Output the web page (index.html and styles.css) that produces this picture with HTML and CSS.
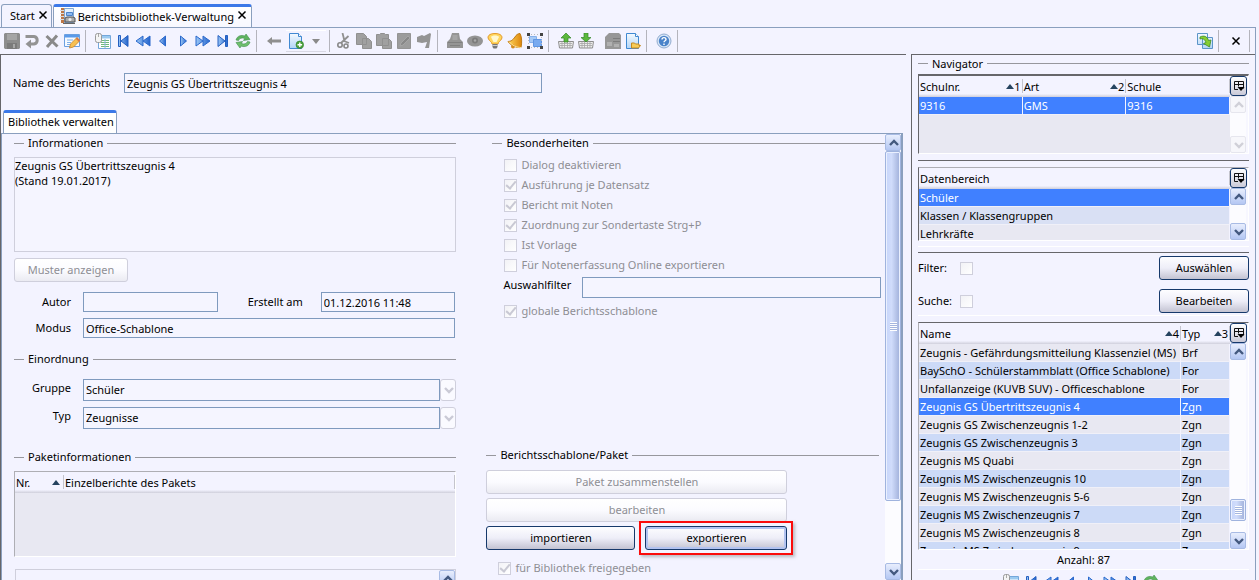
FILE: index.html
```html
<!DOCTYPE html>
<html lang="de">
<head>
<meta charset="utf-8">
<title>Berichtsbibliothek-Verwaltung</title>
<link rel="stylesheet" href="styles.css">
</head>
<body>
<svg class="defs" aria-hidden="true">
  <defs>
    <linearGradient id="g-blue" x1="0" y1="0" x2="1" y2="0"><stop offset="0" stop-color="#9cc8f6"/><stop offset="1" stop-color="#2363cc"/></linearGradient>
    <linearGradient id="g-doc" x1="0" y1="0" x2="0" y2="1"><stop offset="0" stop-color="#f4faff"/><stop offset="1" stop-color="#b2d4f6"/></linearGradient>
    <linearGradient id="g-gold" x1="0" y1="0" x2="1" y2="0"><stop offset="0" stop-color="#ffd65a"/><stop offset="1" stop-color="#dd860c"/></linearGradient>
    <symbol id="i-save" viewBox="0 0 16 16"><path d="M1 0h14l1 1v14l-1 1H1l-1-1V1z" fill="#8d8d8d"/><path d="M3 1h10v6H3z" fill="#a5a5a5"/><path d="M3 10h10v6H3z" fill="#7b7b7b"/><path d="M9 11h2v4H9z" fill="#a8a8a8"/></symbol>
    <symbol id="i-undo" viewBox="0 0 16 16"><path d="M1.500 3.500h8.500a3.800 3.800 0 0 1 0 7.500H5" fill="none" stroke="#939393" stroke-width="3"/><path d="M7 6.500v9L1.500 11z" fill="#939393"/></symbol>
    <symbol id="i-del" viewBox="0 0 16 16"><path d="M2.500 3l11 10.500M13 2.500L3 14" stroke="#8a8a8a" stroke-width="3" fill="none"/></symbol>
    <symbol id="i-edit" viewBox="0 0 16 16"><path d="M.5 1.500h15v12H.5z" fill="#f6faff" stroke="#6b9fe0"/><path d="M1 2h14v2.500H1z" fill="#5a9aea"/><path d="M3 7h6M3 9.500h4M3 11.500h3" stroke="#7fb0ea"/><path d="M5.500 15l1-4L13 4.500l3 3L9.500 14z" fill="#f7c052" stroke="#c4812a" stroke-width=".8"/><path d="M13 4.500l3 3-1.200 1.200-3-3z" fill="#d7744b"/></symbol>
    <symbol id="i-list" viewBox="0 0 16 16"><path d="M3.500 2.500h12v13h-12z" fill="#fff" stroke="#74a7db"/><path d="M4 3h11v2.500H4z" fill="#9bcaf0"/><path d="M6 7.500h8M6 9.500h8M6 11.500h8M6 13.500h8" stroke="#6fb87b"/><path d="M10 6v9" stroke="#8bb8e0"/><rect x=".5" y=".5" width="6" height="9" rx="2" fill="#f4f4f4" stroke="#999"/><path d="M3.500 1v3" stroke="#aaa"/></symbol>
    <symbol id="i-first" viewBox="0 0 16 16"><path d="M3.500 2.500h2v11h-2zM13 2.500v11L6 8z" fill="url(#g-blue)" stroke="#245fc0"/></symbol>
    <symbol id="i-rew" viewBox="0 0 16 16"><path d="M8 3v10L1 8zM15 3v10L8 8z" fill="url(#g-blue)" stroke="#2b69cc"/></symbol>
    <symbol id="i-prev" viewBox="0 0 16 16"><path d="M10.500 3v10l-6-5z" fill="url(#g-blue)" stroke="#2b69cc"/></symbol>
    <symbol id="i-next" viewBox="0 0 16 16"><path d="M5.500 3v10l6-5z" fill="url(#g-blue)" stroke="#2b69cc"/></symbol>
    <symbol id="i-ff" viewBox="0 0 16 16"><path d="M1 3v10l7-5zM8 3v10l7-5z" fill="url(#g-blue)" stroke="#2b69cc"/></symbol>
    <symbol id="i-last" viewBox="0 0 16 16"><path d="M3 2.500v11L10 8zM10.500 2.500h2v11h-2z" fill="url(#g-blue)" stroke="#245fc0"/></symbol>
    <symbol id="i-refresh" viewBox="0 0 16 16"><path d="M1 7c1-4 5-5.500 9-4l1-2 4 5.500-6.500 1 1.200-2C7 4.500 4.500 5 3.500 7.500z" fill="#5fb35f" stroke="#3e8e4a" stroke-width=".6"/><path d="M15 9c-1 4-5 5.500-9 4l-1 2-4-5.500 6.500-1-1.200 2c2.700 1 5.200.5 6.200-2z" fill="#6fbf6d" stroke="#3e8e4a" stroke-width=".6"/></symbol>
    <symbol id="i-back" viewBox="0 0 16 16"><path d="M1 8l5-4v2.500h9v3H6V12z" fill="#8f8f8f"/></symbol>
    <symbol id="i-new" viewBox="0 0 16 16"><path d="M1.500.5h9l3 3v12h-12z" fill="url(#g-doc)" stroke="#4089d2"/><path d="M10.500.5v3h3" fill="#fff" stroke="#4089d2"/><circle cx="11.800" cy="11.800" r="3.800" fill="#4ba13b" stroke="#2d7f2a" stroke-width=".6"/><path d="M11.800 9.500v4.600M9.500 11.800h4.600" stroke="#fff" stroke-width="1.400"/></symbol>
    <symbol id="i-drop" viewBox="0 0 16 16"><path d="M4 6h8l-4 5z" fill="#8a8a8a"/></symbol>
    <symbol id="i-cut" viewBox="0 0 16 16"><path d="M6.500 0l2 8M12.500 3L5 10M8 8l5 2" stroke="#909090" stroke-width="1.800" fill="none"/><circle cx="4" cy="12" r="2.200" fill="none" stroke="#888" stroke-width="1.600"/><circle cx="10" cy="13" r="2" fill="none" stroke="#888" stroke-width="1.600"/></symbol>
    <symbol id="i-copy" viewBox="0 0 16 16"><path d="M.5.5h7l3 3v8H.5zM6.500 5.500h6l3 3v7h-9z" fill="#a0a0a0" stroke="#909090"/></symbol>
    <symbol id="i-paste" viewBox="0 0 16 16"><path d="M.5 1.500h3l1-1h4l1 1h3v11H.5zM6.500 5.500h6l3 3v7h-9z" fill="#a0a0a0" stroke="#909090"/></symbol>
    <symbol id="i-note" viewBox="0 0 16 16"><path d="M1.500.5h13v15h-13z" fill="#9c9c9c" stroke="#949494"/><path d="M4 13l1-3 7-7 2 2-7 7z" fill="#888" stroke="#adadad" stroke-width=".7"/></symbol>
    <symbol id="i-flag" viewBox="0 0 16 16"><path d="M1 4l5-2 2 1 6-3 1 1-2 14h-4l2-6-5 1-5-1z" fill="#949494"/></symbol>
    <symbol id="i-print" viewBox="0 0 16 16"><path d="M5 0h7l1 6 3 3v6H0V9l3-3z" fill="#959595"/><path d="M5.500 2v5h5V2z" fill="#a5a5a5"/><path d="M1 9.500h14M3 12.500h10" stroke="#808080"/></symbol>
    <symbol id="i-eye" viewBox="0 0 16 16"><ellipse cx="8" cy="8" rx="8" ry="5.500" fill="#959595"/><circle cx="8" cy="7.500" r="3" fill="#7c7c7c"/><circle cx="8" cy="7.500" r="1.200" fill="#a9a9a9"/></symbol>
    <symbol id="i-bulb" viewBox="0 0 16 16"><path d="M8 .5c6 0 8 3 6.500 5.500-.8 2-3.500 3-3.500 5H5c0-2-2.700-3-3.500-5C0 3.500 2 .5 8 .5z" fill="#ffd65e" stroke="#e39a2c"/><path d="M4 4c1-2 7-2 8 0L9.500 9h-3z" fill="#fff7cf"/><path d="M5.500 11h5v3l-1 1.500h-3l-1-1.500z" fill="#777"/><path d="M5.500 12.500h5" stroke="#ccc"/></symbol>
    <symbol id="i-bell" viewBox="0 0 16 16"><path d="M13 .5c2 3.500 2 9.500 1 14-4 .5-10-1.500-13-6 3 0 5-1.500 7-4.500 1-2 3-3.500 5-3.500z" fill="url(#g-gold)" stroke="#bf7a12"/><circle cx="6" cy="13.500" r="2" fill="#d58b1b"/><path d="M2 8.500c3 4 8 6 12 6" stroke="#ffe59a" fill="none"/></symbol>
    <symbol id="i-trans" viewBox="0 0 16 16"><path d="M2.500 3.500h7v6h-7z" fill="#a6c9f6" stroke="#86b0ea"/><path d="M6.500 6.500h8v7h-8z" fill="#79aaf0" stroke="#5f95e4"/><path d="M0 0h3v3H0zM13 0h3v3h-3zM0 13h3v3H0zM13 13h3v3h-3z" fill="#444"/><path d="M4 1.500h8M4 14.500h8M1.500 4v8M14.500 4v8" stroke="#bbb" stroke-dasharray="1 2"/></symbol>
    <symbol id="i-up" viewBox="0 0 16 16"><path d="M.5 8.500h15l-1 6.500h-13z" fill="#eee" stroke="#8d8d8d"/><path d="M2 10.500h12M2 12.500h12M4 9v6M6.500 9v6M9.500 9v6M12 9v6" stroke="#a5a5a5" stroke-width=".8"/><path d="M8 0l5 5h-3v4H6V5H3z" fill="#5bb83c" stroke="#34862a" stroke-width=".7"/></symbol>
    <symbol id="i-down" viewBox="0 0 16 16"><path d="M.5 8.500h15l-1 6.500h-13z" fill="#eee" stroke="#8d8d8d"/><path d="M2 10.500h12M2 12.500h12M4 9v6M6.500 9v6M9.500 9v6M12 9v6" stroke="#a5a5a5" stroke-width=".8"/><path d="M8 9L3 4.500h3V0h4v4.500h3z" fill="#5bb83c" stroke="#34862a" stroke-width=".7"/></symbol>
    <symbol id="i-server" viewBox="0 0 16 16"><path d="M4 0h10l2 2v14H0V4z" fill="#979797"/><path d="M8 5.500h7M8 8.500h7" stroke="#7c7c7c"/><path d="M2 9h5v4H2zM9 11h5v3H9z" fill="#b0b0b0"/></symbol>
    <symbol id="i-open" viewBox="0 0 16 16"><path d="M1.500.5h9l3 3v12h-12z" fill="url(#g-doc)" stroke="#4089d2"/><path d="M10.500.5v3h3" fill="#fff" stroke="#4089d2"/><path d="M6.500 15v-5h3l1 1h3.500v1.500h1.500L13.500 15z" fill="#f7cc58" stroke="#c58a22"/></symbol>
    <symbol id="i-help" viewBox="0 0 16 16"><circle cx="8" cy="8" r="7" fill="#d8e6f7" stroke="#93add0"/><circle cx="8" cy="8" r="5.200" fill="#4a83ca"/><path d="M6 6.500c0-2.500 4-2.500 4 0C10 8 8 7.500 8 9.300M8 10.500v1.500" fill="none" stroke="#fff" stroke-width="1.400"/></symbol>
    <symbol id="i-export" viewBox="0 0 16 16"><path d="M.5.500h10v11H.5zM5.500 4.500h10v11h-10z" fill="url(#g-doc)" stroke="#5b94c8"/><path d="M3 4c4-2 7.500-.5 8.500 3.500l2.500-.5-1.500 7L6.500 10.500l2.500-1C8 6.500 6 5 3 6z" fill="#86ce32" stroke="#3f8b24" stroke-width=".8"/></symbol>
    <symbol id="i-book" viewBox="0 0 16 16"><path d="M1 0h4v15H1z" fill="#bd7746"/><path d="M4.500.5h9v14h-9z" fill="#e5f0fc" stroke="#83a9d2"/><path d="M6.500 4.500h6v3h-6z" fill="#8dbaf1" stroke="#4d83ca"/><path d="M0 2.500h4M0 5.500h4M0 8.500h4M0 11.500h4" stroke="#ddd"/><path d="M5 10l2-1h6l2 1v4H5z" fill="#aaa" stroke="#555"/><path d="M3 15.500h12" stroke="#666"/><circle cx="10" cy="11.500" r="1.500" fill="#eee"/></symbol>
    <symbol id="i-close" viewBox="0 0 16 16"><path d="M4.500 4.500l7 7M11.500 4.500l-7 7" stroke="#000" stroke-width="1.500"/></symbol>
    <symbol id="i-cols" viewBox="0 0 16 16"><path d="M3.500 3.500h9v7M3.500 3.500v8H7M3.500 6.500h9M7.500 3.500v5" fill="none" stroke="#111"/><path d="M6.500 9h7L10 13z" fill="#000"/></symbol>
    <symbol id="i-cu" viewBox="0 0 16 16"><path d="M4 10l4-4 4 4" fill="none" stroke="currentColor" stroke-width="2.400"/></symbol>
    <symbol id="i-cd" viewBox="0 0 16 16"><path d="M4 6l4 4 4-4" fill="none" stroke="currentColor" stroke-width="2.400"/></symbol>
  </defs>
</svg>

<nav class="tabs">
  <div class="tab"><a href="#start">Start</a><button class="tab-close" aria-label="Start schließen"><svg><use href="#i-close"/></svg></button></div>
  <div class="tab active"><svg class="tab-icon"><use href="#i-book"/></svg><a href="#bericht">Berichtsbibliothek-Verwaltung</a><button class="tab-close" aria-label="Verwaltung schließen"><svg><use href="#i-close"/></svg></button></div>
</nav>

<div class="window">
  <div class="toolbar" role="toolbar" aria-label="Werkzeuge">
    <button aria-label="Speichern"><svg><use href="#i-save"/></svg></button>
    <button aria-label="Rückgängig"><svg><use href="#i-undo"/></svg></button>
    <button aria-label="Löschen"><svg><use href="#i-del"/></svg></button>
    <button aria-label="Bearbeiten"><svg><use href="#i-edit"/></svg></button>
    <i class="sep"></i>
    <button aria-label="Liste"><svg><use href="#i-list"/></svg></button>
    <button aria-label="Erster"><svg><use href="#i-first"/></svg></button>
    <button aria-label="Seite zurück"><svg><use href="#i-rew"/></svg></button>
    <button aria-label="Zurück"><svg><use href="#i-prev"/></svg></button>
    <button aria-label="Weiter"><svg><use href="#i-next"/></svg></button>
    <button aria-label="Seite weiter"><svg><use href="#i-ff"/></svg></button>
    <button aria-label="Letzter"><svg><use href="#i-last"/></svg></button>
    <button aria-label="Aktualisieren"><svg><use href="#i-refresh"/></svg></button>
    <i class="sep"></i>
    <button aria-label="Vorheriges"><svg><use href="#i-back"/></svg></button>
    <span class="split">
      <button aria-label="Neu"><svg><use href="#i-new"/></svg></button>
      <button aria-label="Neu Auswahl"><svg><use href="#i-drop"/></svg></button>
    </span>
    <i class="sep tight"></i>
    <button aria-label="Ausschneiden"><svg><use href="#i-cut"/></svg></button>
    <button aria-label="Kopieren"><svg><use href="#i-copy"/></svg></button>
    <button aria-label="Einfügen"><svg><use href="#i-paste"/></svg></button>
    <button aria-label="Notiz"><svg><use href="#i-note"/></svg></button>
    <button aria-label="Markieren"><svg><use href="#i-flag"/></svg></button>
    <i class="sep"></i>
    <button aria-label="Drucken"><svg><use href="#i-print"/></svg></button>
    <button aria-label="Vorschau"><svg><use href="#i-eye"/></svg></button>
    <button aria-label="Hinweis"><svg><use href="#i-bulb"/></svg></button>
    <button aria-label="Erinnerung"><svg><use href="#i-bell"/></svg></button>
    <button aria-label="Auswahl"><svg><use href="#i-trans"/></svg></button>
    <i class="sep"></i>
    <button aria-label="Hochladen"><svg><use href="#i-up"/></svg></button>
    <button aria-label="Herunterladen"><svg><use href="#i-down"/></svg></button>
    <button class="apart" aria-label="Archiv"><svg><use href="#i-server"/></svg></button>
    <button aria-label="Öffnen"><svg><use href="#i-open"/></svg></button>
    <i class="sep"></i>
    <button aria-label="Hilfe"><svg><use href="#i-help"/></svg></button>
    <i class="sep"></i>
    <span class="grow"></span>
    <button aria-label="Übertragen"><svg><use href="#i-export"/></svg></button>
    <i class="sep"></i>
    <button aria-label="Schließen"><svg><use href="#i-close"/></svg></button>
    <i class="sep last"></i>
  </div>

  <div class="workspace">
    <main class="editor">
      <div class="name-row">
        <label for="name">Name des Berichts</label>
        <input id="name" type="text" value="Zeugnis GS Übertrittszeugnis 4">
      </div>
      <div class="subtabs"><a class="subtab" href="#verwalten">Bibliothek verwalten</a></div>
      <div class="panel">
        <div class="panel-body">
          <section class="col">
            <div class="group info">
              <h2 class="legend">Informationen</h2>
              <textarea class="memo" aria-label="Informationen">Zeugnis GS Übertrittszeugnis 4
(Stand 19.01.2017)</textarea>
              <button class="btn small" disabled>Muster anzeigen</button>
              <div class="fields">
                <label for="autor">Autor</label><input id="autor" type="text">
                <label for="erstellt">Erstellt am</label><input id="erstellt" type="text" value="01.12.2016 11:48">
                <label for="modus">Modus</label><input id="modus" class="span" type="text" value="Office-Schablone">
              </div>
            </div>
            <div class="group order">
              <h2 class="legend">Einordnung</h2>
              <div class="combo-row"><label for="gruppe">Gruppe</label><select id="gruppe"><option>Schüler</option></select><span class="combo-arrow"><svg><use href="#i-cd"/></svg></span></div>
              <div class="combo-row"><label for="typ">Typ</label><select id="typ"><option>Zeugnisse</option></select><span class="combo-arrow"><svg><use href="#i-cd"/></svg></span></div>
            </div>
            <div class="group">
              <h2 class="legend">Paketinformationen</h2>
              <div class="grid-box package">
                <table class="grid">
                  <colgroup><col class="c-nr"><col></colgroup>
                  <thead><tr><th><span class="th">Nr.<i class="sort"></i></span></th><th>Einzelberichte des Pakets</th></tr></thead>
                </table>
              </div>
            </div>
            <div class="next-box"><button class="sb-btn" aria-label="Nach oben"><svg><use href="#i-cu"/></svg></button></div>
          </section>
          <section class="col">
            <div class="group special">
              <h2 class="legend">Besonderheiten</h2>
              <div class="checks">
                <label class="check"><input type="checkbox" disabled>Dialog deaktivieren</label>
                <label class="check"><input type="checkbox" disabled checked>Ausführung je Datensatz</label>
                <label class="check"><input type="checkbox" disabled checked>Bericht mit Noten</label>
                <label class="check"><input type="checkbox" disabled checked>Zuordnung zur Sondertaste Strg+P</label>
                <label class="check"><input type="checkbox" disabled>Ist Vorlage</label>
                <label class="check"><input type="checkbox" disabled>Für Notenerfassung Online exportieren</label>
              </div>
              <div class="filter-row"><label for="filter">Auswahlfilter</label><input id="filter" type="text"></div>
              <div class="checks"><label class="check"><input type="checkbox" disabled checked>globale Berichtsschablone</label></div>
            </div>
            <div class="group template">
              <h2 class="legend">Berichtsschablone/Paket</h2>
              <div class="actions">
                <button class="btn" disabled>Paket zusammenstellen</button>
                <button class="btn" disabled>bearbeiten</button>
                <div class="pair">
                  <button class="btn">importieren</button>
                  <div class="marked"><button class="btn focus">exportieren</button></div>
                </div>
                <label class="check release"><input type="checkbox" disabled checked>für Bibliothek freigegeben</label>
              </div>
            </div>
          </section>
        </div>
        <div class="scrollbar main-sb">
          <button class="sb-btn" aria-label="Nach oben"><svg><use href="#i-cu"/></svg></button>
          <div class="track"><div class="thumb"><i class="grip"></i></div></div>
          <button class="sb-btn" aria-label="Nach unten"><svg><use href="#i-cd"/></svg></button>
        </div>
      </div>
    </main>

    <aside class="sidebar">
      <h2 class="legend">Navigator</h2>
      <div class="grid-box schools">
        <table class="grid">
          <thead><tr><th><span class="th">Schulnr.<i class="sort"></i>1</span></th><th><span class="th">Art<i class="sort"></i>2</span></th><th>Schule</th></tr></thead>
          <tbody><tr class="sel"><td>9316</td><td>GMS</td><td>9316</td></tr></tbody>
        </table>
        <div class="side">
          <button class="cols-btn" aria-label="Spalten"><svg><use href="#i-cols"/></svg></button>
          <div class="scrollbar off">
            <button class="sb-btn" disabled aria-label="Nach oben"><svg><use href="#i-cu"/></svg></button>
            <div class="track"></div>
            <button class="sb-btn" disabled aria-label="Nach unten"><svg><use href="#i-cd"/></svg></button>
          </div>
        </div>
      </div>
      <div class="frame">
        <div class="grid-box areas">
          <table class="grid">
            <thead><tr><th>Datenbereich</th></tr></thead>
            <tbody><tr class="sel"><td>Schüler</td></tr><tr><td>Klassen / Klassengruppen</td></tr><tr><td>Lehrkräfte</td></tr></tbody>
          </table>
          <div class="side">
            <button class="cols-btn" aria-label="Spalten"><svg><use href="#i-cols"/></svg></button>
            <div class="scrollbar">
              <button class="sb-btn" aria-label="Nach oben"><svg><use href="#i-cu"/></svg></button>
              <div class="track"></div>
              <button class="sb-btn" aria-label="Nach unten"><svg><use href="#i-cd"/></svg></button>
            </div>
          </div>
        </div>
      </div>
      <div class="frame search">
        <div class="search-row"><label for="f1">Filter:</label><input id="f1" type="checkbox"><button class="btn">Auswählen</button></div>
        <div class="search-row"><label for="f2">Suche:</label><input id="f2" type="checkbox"><button class="btn">Bearbeiten</button></div>
      </div>
      <div class="grid-box reports">
        <table class="grid">
          <colgroup><col><col class="c-typ"></colgroup>
          <thead><tr><th><span class="th">Name<i class="sort"></i>4</span></th><th><span class="th">Typ<i class="sort"></i>3</span></th></tr></thead>
          <tbody>
            <tr><td>Zeugnis - Gefährdungsmitteilung Klassenziel (MS)</td><td>Brf</td></tr>
            <tr><td>BaySchO - Schülerstammblatt (Office Schablone)</td><td>For</td></tr>
            <tr><td>Unfallanzeige (KUVB SUV) - Officeschablone</td><td>For</td></tr>
            <tr class="sel"><td>Zeugnis GS Übertrittszeugnis 4</td><td>Zgn</td></tr>
            <tr><td>Zeugnis GS Zwischenzeugnis 1-2</td><td>Zgn</td></tr>
            <tr><td>Zeugnis GS Zwischenzeugnis 3</td><td>Zgn</td></tr>
            <tr><td>Zeugnis MS Quabi</td><td>Zgn</td></tr>
            <tr><td>Zeugnis MS Zwischenzeugnis 10</td><td>Zgn</td></tr>
            <tr><td>Zeugnis MS Zwischenzeugnis 5-6</td><td>Zgn</td></tr>
            <tr><td>Zeugnis MS Zwischenzeugnis 7</td><td>Zgn</td></tr>
            <tr><td>Zeugnis MS Zwischenzeugnis 8</td><td>Zgn</td></tr>
            <tr><td>Zeugnis MS Zwischenzeugnis 9</td><td>Zgn</td></tr>
          </tbody>
        </table>
        <div class="side">
          <button class="cols-btn" aria-label="Spalten"><svg><use href="#i-cols"/></svg></button>
          <div class="scrollbar">
            <button class="sb-btn" aria-label="Nach oben"><svg><use href="#i-cu"/></svg></button>
            <div class="track low"><div class="thumb short"><i class="grip"></i></div></div>
            <button class="sb-btn" aria-label="Nach unten"><svg><use href="#i-cd"/></svg></button>
          </div>
        </div>
      </div>
      <p class="count">Anzahl: 87</p>
      <div class="pager">
        <button aria-label="Liste"><svg><use href="#i-list"/></svg></button>
        <button aria-label="Erster"><svg><use href="#i-first"/></svg></button>
        <button aria-label="Seite zurück"><svg><use href="#i-rew"/></svg></button>
        <button aria-label="Zurück"><svg><use href="#i-prev"/></svg></button>
        <button aria-label="Weiter"><svg><use href="#i-next"/></svg></button>
        <button aria-label="Seite weiter"><svg><use href="#i-ff"/></svg></button>
        <button aria-label="Letzter"><svg><use href="#i-last"/></svg></button>
        <button aria-label="Aktualisieren"><svg><use href="#i-refresh"/></svg></button>
      </div>
    </aside>
  </div>
</div>
</body>
</html>
```

FILE: styles.css
```css
:root {
  --bg: #f3f3ff;
  --line: #8a9fbe;
  --dark: #66666a;
  --soft: #cfcfdc;
  --rule: #97979d;
  --blue: #4080ff;
}

* { box-sizing: border-box; }

body {
  margin: 0;
  height: 100vh;
  overflow: hidden;
  display: flex;
  flex-direction: column;
  background: var(--bg);
  color: #000;
  font: 11px/16px "Noto Sans", "Open Sans", sans-serif;
}

button, input, select, textarea { font: inherit; color: inherit; margin: 0; }
a { color: inherit; text-decoration: none; }
svg { width: 16px; height: 16px; display: block; flex: none; }
.defs { position: absolute; width: 0; height: 0; }

/* window tabs */
.tabs { display: flex; gap: 1px; padding: 4px 0 0 1px; flex: none; }
.tab {
  display: flex;
  align-items: center;
  height: 23px;
  padding: 0 1px 0 8px;
  border: 1px solid var(--line);
  border-bottom: 0;
  border-radius: 3px 3px 0 0;
}
.tab.active { border-top: 3px solid #3b78e8; background: linear-gradient(#fff, #f8f8ff); padding: 0 2px 2px 6px; }
.tab.active a { padding-top: 1px; }
.tab-icon { margin-right: 2px; }
.tab-close { border: 0; padding: 0 0 3px; background: none; }
.tab-close svg { margin-right: -1px; }

.window {
  flex: 1;
  min-height: 0;
  display: flex;
  flex-direction: column;
  margin-right: 3px;
  border-top: 1px solid var(--line);
  border-right: 1px solid var(--line);
}

/* toolbar */
.toolbar { display: flex; align-items: center; height: 26px; padding-left: 2px; flex: none; }
.toolbar button, .pager button { width: 20px; height: 20px; padding: 2px; border: 0; background: none; flex: none; }
.sep { width: 1px; height: 22px; margin: 0 7px 0 3px; background: #b4b4bc; }
.sep.tight { margin-right: 4px; }
.sep.last { margin-right: 5px; }
.split { display: flex; margin-left: 2px; border-top: 1px solid #fff; border-bottom: 1px solid #d8d8e4; }
.apart { margin-left: 7px; }
.grow { flex: 1; }

.workspace { flex: 1; min-height: 0; display: grid; grid-template-columns: minmax(0, 1fr) 344px; gap: 5px; }

/* editor */
.editor {
  display: flex;
  flex-direction: column;
  min-height: 0;
  padding-right: 3px;
  border-top: 1px solid var(--dark);
  border-left: 1px solid var(--dark);
}
.name-row { display: grid; grid-template-columns: 111px 47%; align-items: center; padding: 18px 0 17px 12px; }
input[type="text"], select {
  min-width: 0;
  width: 100%;
  height: 20px;
  padding: 0 2px;
  border: 1px solid #7f9abe;
  border-radius: 0;
  background: #f5f5ff;
}
.subtabs { padding-left: 2px; flex: none; }
.subtab {
  display: inline-block;
  vertical-align: top;
  height: 23px;
  padding: 1px 2px 0 4px;
  border: 1px solid var(--line);
  border-top: 3px solid #3b78e8;
  border-bottom: 0;
  border-radius: 3px 3px 0 0;
  background: #fff;
}
.panel { flex: 1; min-height: 0; display: flex; border: 1px solid var(--line); border-bottom: 0; border-right-width: 2px; }
.panel-body {
  flex: 1;
  min-width: 0;
  overflow: hidden;
  display: grid;
  grid-template-columns: minmax(0, 443fr) minmax(0, 399fr);
  gap: 30px;
  padding-left: 12px;
}

.legend { display: flex; align-items: center; gap: 4px; margin: 0; height: 18px; font-size: 11px; line-height: 18px; font-weight: 400; }
.legend::before, .legend::after { content: ""; height: 1px; background: var(--rule); }
.legend::before { width: 10px; }
.legend::after { flex: 1; }

.memo {
  display: block;
  width: 100%;
  height: 95px;
  margin: 5px 0 6px;
  padding: 0;
  border: 1px solid var(--soft);
  background: #f5f5ff;
  line-height: 15px;
  resize: none;
  overflow: hidden;
}
.btn {
  height: 24px;
  padding: 0 8px;
  border: 1px solid #16396b;
  border-radius: 3px;
  background: linear-gradient(#fdfdff, #eeeef8 50%, #c3c3d2);
  text-align: center;
}
.btn:disabled { border-color: var(--soft); color: #8e8e94; background: linear-gradient(#fff, #fbfbff 50%, #ebebf2); }
.btn.small { width: 114px; }
.btn.focus { box-shadow: inset 0 0 0 2px #b3c3f0; }

.fields {
  display: grid;
  grid-template-columns: 57px minmax(0, 1fr) 79px minmax(0, 1fr);
  row-gap: 6px;
  column-gap: 12px;
  align-items: center;
  margin: 10px 1px 0 0;
}
.fields label { text-align: right; }
.fields label:nth-of-type(2) { padding-right: 6px; }
.fields .span { grid-column: span 3; }
.order { padding-top: 12px; }
.combo-row { display: flex; align-items: center; margin-top: 6px; }
.order .legend + .combo-row { margin-top: 11px; }
.combo-row label { width: 57px; margin-right: 12px; padding-bottom: 5px; text-align: right; }
.combo-row select { flex: 1; height: 22px; appearance: none; }
.combo-arrow { width: 16px; height: 22px; display: grid; place-items: center; overflow: hidden; border: 1px solid var(--soft); border-radius: 3px; color: #cacad6; background: #fafaff; }
.order + .group { padding-top: 19px; }

/* tables */
.grid-box { display: flex; border: 1px solid #aeaeb4; border-right-color: #fff; border-bottom-color: #fff; background: #e8e8f2; overflow: hidden; }
.grid { flex: 1; width: 100%; min-width: 0; align-self: flex-start; table-layout: fixed; border-collapse: separate; border-spacing: 0; }
.grid th { height: 21px; padding: 0 0 0 1px; text-align: left; font-weight: 400; background: linear-gradient(to left, #c4c4cc 1px, transparent 1px) 0 3px / 100% 14px no-repeat, linear-gradient(var(--bg) 85%, #cfcfdb); white-space: nowrap; }
.grid td { height: 18px; padding: 0 0 0 1px; line-height: 16px; border-right: 1px solid #f3f3ff; border-bottom: 1px solid #f0f0f8; white-space: nowrap; overflow: hidden; }
.grid tbody tr:nth-child(even) td { background: #ccdaf7; }
.areas .grid tbody tr:nth-child(even) td { background: #d9e0f4; }
.grid .sel td, .grid tbody tr.sel:nth-child(even) td { background: var(--blue); color: #fff; }
.th { display: flex; align-items: center; padding-right: 2px; }
.sort { margin-left: auto; border: 4px solid transparent; border-top: 0; border-bottom: 5px solid #25435f; }
.c-nr { width: 49px; }
.c-typ { width: 49px; }
.package { height: 86px; margin-top: 5px; }
.package .sort { margin-right: 2px; }
.next-box { display: flex; justify-content: flex-end; height: 60px; margin: 12px 0 0 1px; border: 1px solid var(--soft); }

.side { width: 18px; flex: none; display: flex; flex-direction: column; background: #f7f7ff; }
.cols-btn { width: 17px; height: 20px; padding: 0; border: 1px solid #16396b; border-radius: 3px; background: linear-gradient(#fff, #cacad8); display: grid; place-items: center; flex: none; }
.scrollbar { flex: 1; min-height: 0; width: 16px; display: flex; flex-direction: column; background: #fcfcff; }
.main-sb { flex: none; }
.sb-btn { width: 16px; height: 17px; padding: 0; display: grid; place-items: center; overflow: hidden; flex: none; border: 1px solid #a8bbe4; border-radius: 2px; color: #43597f; background: linear-gradient(#e8eefd, #b4c7f3); }
.sb-btn:disabled { border-color: #e6e6ee; color: #d0d0d8; background: #f7f7fb; }
.track { flex: 1; min-height: 0; display: flex; flex-direction: column; }
.track.low { justify-content: flex-end; padding-bottom: 11px; }
.thumb { height: 85%; display: grid; place-items: center; border: 1px solid #9fb3de; border-radius: 2px; box-shadow: inset 0 0 0 1px #eaf0ff; background: linear-gradient(to right, #c8d6fb, #d0dcfb 40%, #9fafd9); }
.thumb.short { height: 22px; }
.grip { width: 7px; height: 9px; background: repeating-linear-gradient(#fff 0 1px, #a5b6df 1px 2px); }

/* right column of the form */
.special { padding-left: 6px; }
.checks { padding: 3px 0 0 12px; }
.check { display: flex; align-items: center; gap: 4px; height: 20px; color: #8e8e94; }
input[type="checkbox"] { appearance: none; width: 13px; height: 13px; flex: none; border: 1px solid var(--soft); background: linear-gradient(135deg, #f2f2f6, #fff); display: grid; place-items: center; }
input[type="checkbox"]:checked::before { content: ""; width: 4px; height: 8px; margin-top: -2px; border: solid #c9c9d4; border-width: 0 2px 2px 0; rotate: 40deg; }
.filter-row { display: grid; grid-template-columns: 79px minmax(0, 1fr); padding: 2px 4px 0 11px; }
.filter-row input { height: 21px; }
.template { padding: 125px 6px 0 0; }
.actions { display: flex; flex-direction: column; gap: 4px; width: 301px; margin-top: 6px; }
.pair { display: grid; grid-template-columns: 149px 142px; column-gap: 10px; }
.marked { position: relative; display: grid; }
.marked::after { content: ""; position: absolute; inset: -5px -6px; border: 2px solid #fb0b0b; box-shadow: 2px 2px 3px #8888; }
.release { margin: 4px 0 0 12px; }

/* sidebar */
.sidebar { display: flex; flex-direction: column; min-height: 0; overflow: hidden; padding: 0 6px; border-top: 1px solid var(--dark); border-left: 1px solid var(--dark); }
.sidebar .legend { flex: none; height: 17px; line-height: 17px; }
.schools { height: 80px; margin-top: 2px; border-top: 2px solid var(--dark); border-left-color: var(--dark); flex: none; }
.frame { margin-top: 6px; border-top: 1px solid var(--dark); border-bottom: 1px solid #fff; flex: none; }
.areas { height: 74px; margin: 6px 0 5px; border-left-color: var(--dark); }
.search { padding: 3px 0 2px; display: grid; gap: 9px; margin-top: 5px; }
.search-row { display: grid; grid-template-columns: 42px 1fr 90px; align-items: center; }
.reports { flex: 1; min-height: 0; margin-top: 6px; border-top-color: var(--dark); }
.count { margin: 0; height: 20px; line-height: 19px; text-align: center; border-bottom: 1px solid #fff; flex: none; }
.pager { display: flex; justify-content: center; height: 10px; padding: 2px 6px 0 0; flex: none; overflow: hidden; }
```
